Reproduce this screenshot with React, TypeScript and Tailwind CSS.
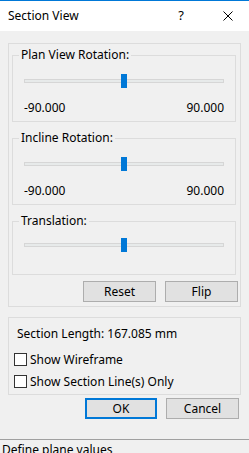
import React from "react";

const font = { fontFamily: '"Noto Sans", "Segoe UI", sans-serif' };

function Slider() {
  return (
    <div className="relative h-[14px]">
      <div className="absolute left-0 right-0 top-[5px] h-[4px] bg-[#e7eaea] border border-[#d6d6d6]" />
      <div className="absolute left-1/2 -ml-[3px] top-0 w-[6px] h-[14px] bg-[#0078d7]" />
    </div>
  );
}

function Group({ label, children, className }: { label: string; children: React.ReactNode; className?: string }) {
  return (
    <div className={"relative shrink-0 border border-[#dcdcdc] " + (className ?? "")}>
      <div className="absolute left-[6px] -top-[9px] px-[2px] bg-[#f0f0f0] text-[12px] leading-[16px] text-black">
        {label}
      </div>
      {children}
    </div>
  );
}

function Btn({ children, primary }: { children: React.ReactNode; primary?: boolean }) {
  return (
    <div
      className={
        "flex items-center justify-center h-[21px] bg-[#e1e1e1] text-[12px] text-black " +
        (primary ? "border-2 border-[#0078d7] w-[72px]" : "border border-[#adadad] w-[73px]")
      }
    >
      {children}
    </div>
  );
}

function Check({ label }: { label: string }) {
  return (
    <div className="flex items-center h-[13px]">
      <div className="w-[13px] h-[13px] bg-white border border-[#333333]" />
      <span className="ml-[3px] text-[12px] leading-[16px]">{label}</span>
    </div>
  );
}

export default function App() {
  return (
    <div className="w-[249px] h-[453px] bg-[#f0f0f0] overflow-hidden flex flex-col text-black" style={font}>
      <div className="shrink-0 h-[1px] bg-[#0078d7]" />
      <div className="shrink-0 h-[30px] bg-white flex items-center">
        <span className="ml-[8px] text-[12px]">Section View</span>
        <span className="ml-auto mr-[39px] text-[13px]">?</span>
        <svg width="10" height="10" viewBox="0 0 10 10" className="mr-[16px]">
          <path d="M0.5 0.5 L9.5 9.5 M9.5 0.5 L0.5 9.5" stroke="#000" strokeWidth="1" />
        </svg>
      </div>

      <div className="shrink-0 mt-[12px] ml-[8px] w-[233px] h-[264px] border border-[#dcdcdc] flex flex-col pl-[3px] pr-[4px] pt-[11px]">
        <Group label="Plan View Rotation:" className="h-[67px] px-[11px] pt-[18px]">
          <Slider />
          <div className="flex justify-between mt-[12px] text-[12px] leading-[16px]">
            <span>-90.000</span>
            <span>90.000</span>
          </div>
        </Group>
        <Group label="Incline Rotation:" className="mt-[16px] h-[67px] px-[11px] pt-[18px]">
          <Slider />
          <div className="flex justify-between mt-[12px] text-[12px] leading-[16px]">
            <span>-90.000</span>
            <span>90.000</span>
          </div>
        </Group>
        <Group label="Translation:" className="mt-[16px] h-[54px] px-[11px] pt-[16px]">
          <Slider />
        </Group>
        <div className="shrink-0 flex justify-end gap-[9px] mt-[6px] -mr-[2px]">
          <Btn>Reset</Btn>
          <Btn>Flip</Btn>
        </div>
      </div>

      <div className="shrink-0 mt-[10px] ml-[8px] w-[233px] h-[78px] border border-[#dcdcdc] flex flex-col pl-[5px]">
        <div className="mt-[8px] ml-[3px] text-[12px] leading-[16px]">Section Length: 167.085 mm</div>
        <div className="mt-[11px]">
          <Check label="Show Wireframe" />
        </div>
        <div className="mt-[9px]">
          <Check label="Show Section Line(s) Only" />
        </div>
      </div>

      <div className="shrink-0 flex justify-end gap-[9px] mt-[3px] mr-[10px]">
        <Btn primary>OK</Btn>
        <Btn>Cancel</Btn>
      </div>

      <div className="shrink-0 mt-[20px] border-t border-[#a0a0a0] pl-[2px] pt-[2px] text-[12px] leading-[16px]">
        Define plane values
      </div>
    </div>
  );
}
